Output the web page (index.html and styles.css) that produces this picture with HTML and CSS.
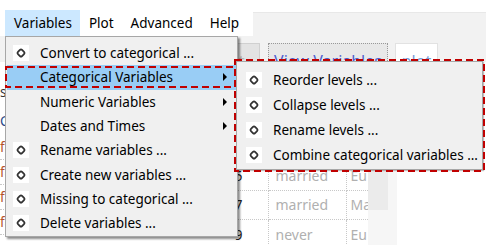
FILE: index.html
```html
<!DOCTYPE html>
<html lang="en">
<head>
  <meta charset="UTF-8">
  <title>Variables menu</title>
  <link rel="stylesheet" href="styles.css">
</head>
<body>

  <!-- Background application window -->
  <div class="app">
    <header class="top">
      <nav class="menubar">
        <span class="mb-item active">Variables</span>
        <span class="mb-item">Plot</span>
        <span class="mb-item">Advanced</span>
        <span class="mb-item">Help</span>
      </nav>
      <div class="panel-top"></div>
    </header>

    <div class="toolbar">
      <span class="tb-button gray">Plot</span>
      <span class="tb-button view">View Variables</span>
      <span class="tb-button plain">plot</span>
    </div>

    <div class="content">
      <ul class="varlist">
        <li class="dark">status</li>
        <li class="blue">Country</li>
        <li class="lined">fair</li>
        <li class="lined">fair</li>
        <li class="lined">fair</li>
        <li class="lined">fair</li>
      </ul>

      <table class="grid">
        <tr><td class="num">1</td><td>married</td><td>Eu</td><td class="bar"></td></tr>
        <tr><td class="num">3</td><td>never</td><td>Eu</td><td class="bar"></td></tr>
        <tr><td class="num">3</td><td>married</td><td>Ma</td><td class="bar"></td></tr>
        <tr><td class="num">5</td><td>married</td><td>Eu</td><td class="bar dark-bar"></td></tr>
        <tr><td class="num">7</td><td>married</td><td>Ma</td><td class="bar half-bar"></td></tr>
        <tr><td class="num">9</td><td>never</td><td>Eu</td><td class="bar light-bar"></td></tr>
      </table>
    </div>
  </div>

  <!-- Dropdown: Variables -->
  <div class="menu main-menu">
    <div class="menu-item"><span class="mi-icon"></span><span class="mi-label">Convert to categorical ...</span></div>
    <div class="menu-item selected"><span class="mi-blank"></span><span class="mi-label">Categorical Variables</span><span class="mi-arrow"></span></div>
    <div class="menu-item"><span class="mi-blank"></span><span class="mi-label">Numeric Variables</span><span class="mi-arrow"></span></div>
    <div class="menu-item"><span class="mi-blank"></span><span class="mi-label">Dates and Times</span><span class="mi-arrow"></span></div>
    <div class="menu-item"><span class="mi-icon"></span><span class="mi-label">Rename variables ...</span></div>
    <div class="menu-item"><span class="mi-icon"></span><span class="mi-label">Create new variables ...</span></div>
    <div class="menu-item"><span class="mi-icon"></span><span class="mi-label">Missing to categorical ...</span></div>
    <div class="menu-item"><span class="mi-icon"></span><span class="mi-label">Delete variables ...</span></div>
  </div>

  <!-- Submenu: Categorical Variables -->
  <div class="menu sub-menu">
    <div class="menu-item"><span class="mi-icon"></span><span class="mi-label">Reorder levels ...</span></div>
    <div class="menu-item"><span class="mi-icon"></span><span class="mi-label">Collapse levels ...</span></div>
    <div class="menu-item"><span class="mi-icon"></span><span class="mi-label">Rename levels ...</span></div>
    <div class="menu-item"><span class="mi-icon"></span><span class="mi-label">Combine categorical variables ...</span></div>
  </div>

  <!-- Red dashed call-outs -->
  <svg class="callouts" width="486" height="245" viewBox="0 0 486 245">
    <rect x="6" y="67" width="229" height="20" />
    <rect x="235" y="60" width="249" height="111" />
  </svg>

</body>
</html>
```

FILE: styles.css
```css
/* Global */
body {
  margin: 0;
  width: 486px;
  height: 245px;
  overflow: hidden;
  position: relative;
  background-color: #ffffff;
  font-family: 'Noto Sans', 'Open Sans', sans-serif;
  font-size: 13.5px;
  color: #000;
}

/* Background window */
.top {
  display: flex;
  height: 36px;
}

.menubar {
  display: flex;
  width: 253px;
  padding: 10px 0 0 5px;
  box-sizing: border-box;
}

.mb-item {
  padding: 0 8px 0 9px;
  line-height: 26px;
}

.mb-item.active {
  background-color: #cce8ff;
}

.panel-top {
  flex: 1;
  margin-top: 12px;
  background-color: #f2f2f2;
  border-top: 1px solid #e8e8e8;
}

.toolbar {
  display: flex;
  height: 26px;
  padding-top: 7px;
  box-sizing: border-box;
  background-color: #f2f2f2;
}

.tb-button {
  height: 28px;
  box-sizing: border-box;
  font-size: 16px;
  line-height: 34px;
  text-align: center;
  overflow: hidden;
}

.tb-button.gray {
  margin-left: 200px;
  width: 60px;
  background-color: #e3e3e3;
  border: 1px solid #d0d0d0;
  color: #b5b5b5;
}

.tb-button.view {
  margin-left: 8px;
  width: 120px;
  background-color: #e8e8e8;
  border: 1px dotted #999;
  color: #4f5fd0;
  text-decoration: underline;
}

.tb-button.plain {
  margin-left: 7px;
  width: 43px;
  background-color: #fff;
  border: 1px solid #e2e2e2;
  color: #7b9bd8;
}

.content {
  display: flex;
  padding-top: 10px;
}

.varlist {
  list-style: none;
  margin: 0;
  padding: 0;
  width: 200px;
  flex-shrink: 0;
}

.varlist li {
  height: 25px;
  line-height: 25px;
  padding-left: 0;
  color: #b4532a;
}

.varlist li.dark {
  height: 30px;
  line-height: 30px;
  margin-top: 5px;
  color: #333;
}

.varlist li.blue {
  height: 28px;
  line-height: 28px;
  color: #2a4a8a;
}

.varlist li.lined {
  border-bottom: 1px dotted #c8c8c8;
  box-sizing: border-box;
}

.grid {
  border-collapse: collapse;
  color: #b0b0b0;
  font-size: 14px;
}

.grid td {
  height: 29.5px;
  padding: 0;
  border-bottom: 1px dotted #c8c8c8;
  box-sizing: border-box;
  white-space: nowrap;
}

.grid td.num {
  width: 68px;
  padding-right: 25px;
  text-align: right;
  color: #222;
  border-right: 1px dotted #c8c8c8;
}

.grid td:nth-child(2) {
  width: 78px;
  padding-left: 7px;
  border-right: 1px dotted #c8c8c8;
}

.grid td:nth-child(3) {
  width: 22px;
  max-width: 22px;
  padding-left: 4px;
  overflow: hidden;
}

.grid td.bar {
  width: 29px;
  border-bottom: none;
}

.grid td.dark-bar {
  background: linear-gradient(to right, #ebebeb 20px, #f6f6f6 20px);
}

.grid td.half-bar {
  background: linear-gradient(to bottom, #ebebeb 20px, #f6f6f6 20px);
  background-size: 20px 100%;
  background-repeat: no-repeat;
  background-color: #f6f6f6;
}

.grid td.light-bar {
  background-color: #f6f6f6;
}

/* Menus (drawn over the window) */
.menu {
  position: absolute;
  box-sizing: border-box;
  background-color: #f0f0f0;
  border: 1px solid #a7a7a7;
  box-shadow: 2px 2px 2px rgba(0, 0, 0, 0.45);
}

.main-menu {
  left: 5px;
  top: 36px;
  width: 233px;
  height: 201px;
  padding: 4px 1px 0 1px;
}

.sub-menu {
  left: 236px;
  top: 61px;
  width: 247px;
  height: 109px;
  padding: 5px 1px 0 1px;
  box-shadow: 1px 1px 1px rgba(0, 0, 0, 0.25);
}

.menu-item {
  display: flex;
  align-items: center;
  height: 24.3px;
}

.sub-menu .menu-item {
  height: 25px;
}

.menu-item.selected {
  background-color: #99cdf5;
}

.mi-icon,
.mi-blank {
  width: 16px;
  height: 16px;
  margin-left: 6px;
  flex-shrink: 0;
}

.mi-icon {
  background-color: #fff;
  background-image: url("data:image/svg+xml;utf8,<svg xmlns='http://www.w3.org/2000/svg' width='16' height='16' viewBox='0 0 16 16'><rect x='5.1' y='5.1' width='5.8' height='5.8' rx='1.5' transform='rotate(45 8 8)' fill='none' stroke='%23333' stroke-width='1.8'/></svg>");
}

.mi-label {
  margin-left: 11px;
  white-space: nowrap;
}

.sub-menu .mi-icon {
  margin-left: 8px;
}

.mi-arrow {
  margin-left: auto;
  margin-right: 9px;
  width: 0;
  height: 0;
  border-left: 4px solid #000;
  border-top: 4px solid transparent;
  border-bottom: 4px solid transparent;
}

.callouts {
  position: absolute;
  left: 0;
  top: 0;
  pointer-events: none;
}

.callouts rect {
  fill: none;
  stroke: #c00000;
  stroke-width: 2;
  stroke-dasharray: 7 4;
}
```
